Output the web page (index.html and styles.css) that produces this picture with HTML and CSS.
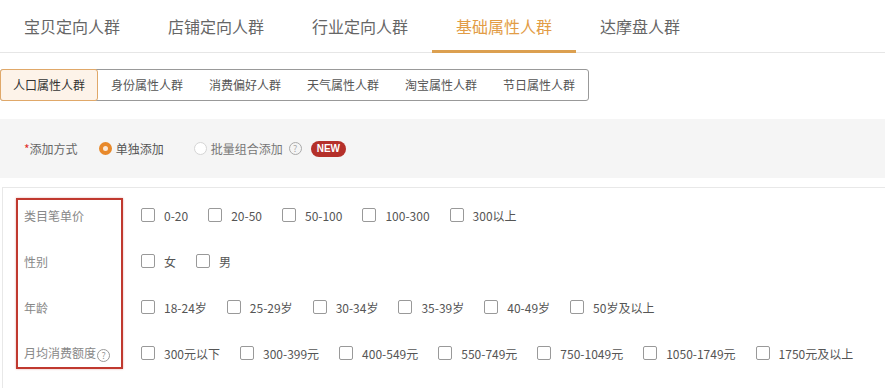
FILE: index.html
```html
<!DOCTYPE html>
<html>
<head>
  <meta charset="UTF-8">
  <title>人群定向</title>
  <link rel="stylesheet" href="styles.css">
</head>
<body>
  <div class="tabs">
    <a class="tab">宝贝定向人群</a>
    <a class="tab">店铺定向人群</a>
    <a class="tab">行业定向人群</a>
    <a class="tab active">基础属性人群</a>
    <a class="tab">达摩盘人群</a>
  </div>

  <div class="subtabs">
    <a class="subtab active">人口属性人群</a>
    <a class="subtab">身份属性人群</a>
    <a class="subtab">消费偏好人群</a>
    <a class="subtab">天气属性人群</a>
    <a class="subtab">淘宝属性人群</a>
    <a class="subtab">节日属性人群</a>
  </div>

  <div class="mode">
    <span class="mode-label"><span class="req">*</span>添加方式</span>
    <label class="radio checked"><span class="dot"></span>单独添加</label>
    <label class="radio"><span class="dot"></span>批量组合添加</label>
    <span class="help">?</span>
    <span class="badge">NEW</span>
  </div>

  <div class="attrs">
    <div class="row">
      <div class="label">类目笔单价</div>
      <label class="check"><span class="box"></span>0-20</label>
      <label class="check"><span class="box"></span>20-50</label>
      <label class="check"><span class="box"></span>50-100</label>
      <label class="check"><span class="box"></span>100-300</label>
      <label class="check"><span class="box"></span>300以上</label>
    </div>
    <div class="row">
      <div class="label">性别</div>
      <label class="check"><span class="box"></span>女</label>
      <label class="check"><span class="box"></span>男</label>
    </div>
    <div class="row">
      <div class="label">年龄</div>
      <label class="check"><span class="box"></span>18-24岁</label>
      <label class="check"><span class="box"></span>25-29岁</label>
      <label class="check"><span class="box"></span>30-34岁</label>
      <label class="check"><span class="box"></span>35-39岁</label>
      <label class="check"><span class="box"></span>40-49岁</label>
      <label class="check"><span class="box"></span>50岁及以上</label>
    </div>
    <div class="row">
      <div class="label">月均消费额度<span class="help small">?</span></div>
      <label class="check"><span class="box"></span>300元以下</label>
      <label class="check"><span class="box"></span>300-399元</label>
      <label class="check"><span class="box"></span>400-549元</label>
      <label class="check"><span class="box"></span>550-749元</label>
      <label class="check"><span class="box"></span>750-1049元</label>
      <label class="check"><span class="box"></span>1050-1749元</label>
      <label class="check"><span class="box"></span>1750元及以上</label>
    </div>
    <div class="mark"></div>
  </div>
</body>
</html>
```

FILE: styles.css
```css
body {
  margin: 0;
  background-color: white;
  color: #555;
  font-family: 'Noto Sans CJK SC', 'Noto Sans', sans-serif;
  font-size: 12px;
  overflow: hidden;
}
.tabs {
  display: flex;
  height: 52px;
  border-bottom: 1px solid #e6e6e6;
}
.tab {
  padding: 0 24px;
  font-size: 16px;
  line-height: 52px;
  color: #666;
  box-sizing: border-box;
  height: 53px;
}
.tab.active {
  color: #e29c45;
  border-bottom: 3px solid #dca050;
}
.subtabs {
  display: inline-flex;
  margin-top: 16px;
  border: 1px solid #999;
  border-radius: 3px;
  height: 30px;
}
.subtab {
  padding: 0 13px;
  line-height: 30px;
  color: #555;
}
.subtab.active {
  padding: 0 12px;
  margin: -1px 0 -1px -1px;
  line-height: 30px;
  border: 1px solid #e0a869;
  border-radius: 3px;
  background-color: #fdf3e9;
  color: #333;
}
.mode {
  display: flex;
  align-items: center;
  margin-top: 18px;
  height: 59px;
  padding-left: 24px;
  background-color: #f5f5f5;
  color: #666;
}
.req {
  color: #e0302a;
}
.mode-label {
  margin-right: 21px;
}
.radio {
  display: flex;
  align-items: center;
  margin-right: 30px;
}
.radio .dot {
  width: 13px;
  height: 13px;
  box-sizing: border-box;
  border: 1px solid #d5d5d5;
  border-radius: 50%;
  background-color: white;
  margin-right: 4px;
}
.radio.checked {
  color: #555;
}
.radio.checked .dot {
  border: 4px solid #e8892b;
  background-color: #fbe8d6;
}
.radio + .radio {
  margin-right: 6px;
  color: #777;
}
.help {
  display: inline-block;
  width: 11px;
  height: 11px;
  border: 1px solid #aaa;
  border-radius: 50%;
  color: #aaa;
  font-size: 9px;
  line-height: 11px;
  text-align: center;
  margin-right: 9px;
}
.help.small {
  margin: 0 0 0 1px;
  border-color: #999;
  color: #999;
  vertical-align: -1px;
}
.badge {
  background-color: #b5302a;
  color: white;
  font-family: 'Liberation Sans', sans-serif;
  font-weight: bold;
  font-size: 10px;
  line-height: 16px;
  padding: 0 6px;
  border-radius: 8px;
}
.attrs {
  position: relative;
  margin: 9px 0 0 2px;
  padding-top: 4px;
  border-top: 1px solid #e8e8e8;
  border-left: 1px solid #e8e8e8;
  height: 197px;
}
.row {
  display: flex;
  align-items: center;
  height: 46px;
}
.label {
  width: 117px;
  padding-left: 21px;
  color: #888;
  flex-shrink: 0;
}
.check {
  display: flex;
  align-items: center;
  margin-right: 20px;
  color: #555;
  white-space: nowrap;
}
.check .box {
  width: 14px;
  height: 14px;
  box-sizing: border-box;
  border: 1px solid #999;
  border-radius: 2px;
  margin-right: 9px;
  background-color: white;
}
.mark {
  position: absolute;
  left: 13px;
  top: 10px;
  width: 103px;
  height: 167px;
  border: 2px solid #c0392f;
  box-shadow: 0 0 2px rgba(192, 57, 47, 0.4);
}
```
